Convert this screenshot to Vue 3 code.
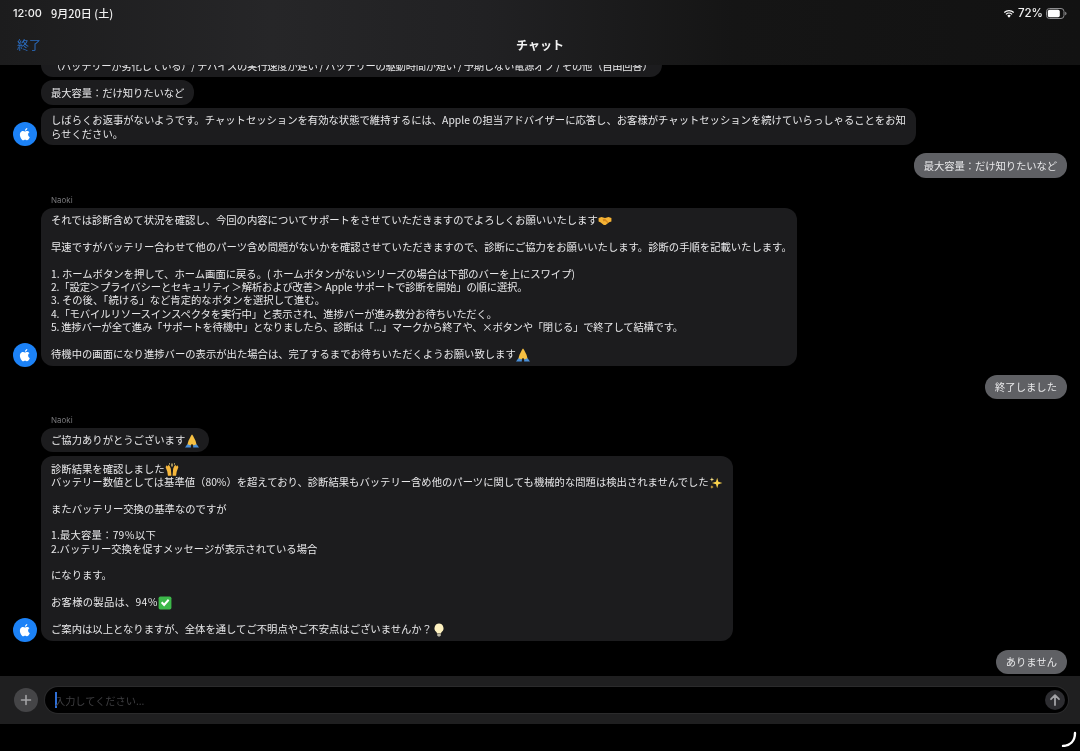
<script setup>
const blank = { t: '' }
const emojis = {
  shake: [
    { f: '#f5b335', d: 'M1 7l5-2 6 2 6-2 5 2v6l-4 1-6 5-3 0-6-5-3-1z' },
    { f: '#d98a1f', d: 'M8 9l4-1 6 6-1 2-5-4-3 1z' }
  ],
  pray: [
    { f: '#f6c042', d: 'M11.400 1l.6 1v14l-2 4-6-1.500 2-7z' },
    { f: '#f6c042', d: 'M12.600 1l-.6 1v14l2 4 6-1.500-2-7z' },
    { f: '#4a90d9', d: 'M0 23l4-5.500 6 2 0 3.500zM24 23l-4-5.500-6 2 0 3.500z' }
  ],
  hands: [
    { f: '#f6b73c', d: 'M1 7l2-3 2 2 1-3 2 2 2 5 1 12H5l-1-7z' },
    { f: '#f6b73c', d: 'M23 7l-2-3-2 2-1-3-2 2-2 5-1 12h6l1-7z' },
    { f: '#fde28a', d: 'M11 1h2v5h-2zM7.500 0h1v3h-1zM15.500 0h1v3h-1z' }
  ],
  spark: [
    { f: '#fbd34d', d: 'M14 3l2 7 7 2-7 2-2 7-2-7-7-2 7-2z' },
    { f: '#fde68a', d: 'M5 2l1 3 3 1-3 1-1 3-1-3-3-1 3-1z' },
    { f: '#f6c042', d: 'M5 16l.8 2.200L8 19l-2.200.8L5 22l-.8-2.200L2 19l2.200-.8z' }
  ],
  check: [
    { f: '#3cb84a', d: 'M4 1h16a3 3 0 0 1 3 3v16a3 3 0 0 1-3 3H4a3 3 0 0 1-3-3V4a3 3 0 0 1 3-3z' },
    { f: '#ffffff', d: 'M5 12l2.500-2.500 3 3L17 5l2.500 2.500-9 10.500z' }
  ],
  bulb: [
    { f: '#fdf1c0', d: 'M12 1a8 8 0 0 0-5 14c1 1 1.500 2 1.500 3h7c0-1 .5-2 1.500-3a8 8 0 0 0-5-14z' },
    { f: '#b9b4a4', d: 'M9 19h6v2l-1.500 2h-3L9 21z' }
  ]
}

const groups = [
  { id: 1, side: 'left', lines: [{ ls: -0.28, t: '（バッテリーが劣化している）/ デバイスの実行速度が遅い / バッテリーの駆動時間が短い / 予期しない電源オフ / その他（自由回答）' }] },
  { id: 2, side: 'left', gap: 3, lines: [{ ls: -0.08, t: '最大容量：だけ知りたいなど' }] },
  { id: 3, side: 'left', gap: 3, avatar: true, lines: [{ t: 'しばらくお返事がないようです。チャットセッションを有効な状態で維持するには、Apple の担当アドバイザーに応答し、お客様がチャットセッションを続けていらっしゃることをお知らせください。' }] },
  { id: 4, side: 'right', gap: 8, lines: [{ ls: -0.08, t: '最大容量：だけ知りたいなど' }] },
  { id: 5, side: 'left', label: 'Naoki', gap: 15, avatar: true, w: 756, lines: [
    { t: 'それでは診断含めて状況を確認し、今回の内容についてサポートをさせていただきますのでよろしくお願いいたします', e: 'shake' },
    blank,
    { t: '早速ですがバッテリー合わせて他のパーツ含め問題がないかを確認させていただきますので、診断にご協力をお願いいたします。診断の手順を記載いたします。' },
    blank,
    { t: '1. ホームボタンを押して、ホーム画面に戻る。( ホームボタンがないシリーズの場合は下部のバーを上にスワイプ)' },
    { ls: -0.15, t: '2.「設定＞プライバシーとセキュリティ＞解析および改善＞ Apple サポートで診断を開始」の順に選択。' },
    { t: '3. その後、「続ける」など肯定的なボタンを選択して進む。' },
    { ls: -0.11, t: '4.「モバイルリソースインスペクタを実行中」と表示され、進捗バーが進み数分お待ちいただく。' },
    { ls: -0.235, t: '5. 進捗バーが全て進み「サポートを待機中」となりましたら、診断は「...」マークから終了や、×ボタンや「閉じる」で終了して結構です。' },
    blank,
    { t: '待機中の画面になり進捗バーの表示が出た場合は、完了するまでお待ちいただくようお願い致します', e: 'pray' }
  ] },
  { id: 6, side: 'right', gap: 9, lines: [{ t: '終了しました' }] },
  { id: 7, side: 'left', label: 'Naoki', gap: 14, lines: [{ t: 'ご協力ありがとうございます', e: 'pray' }] },
  { id: 8, side: 'left', gap: 4, avatar: true, lines: [
    { t: '診断結果を確認しました', e: 'hands' },
    { t: 'バッテリー数値としては基準値（80%）を超えており、診断結果もバッテリー含め他のパーツに関しても機械的な問題は検出されませんでした', e: 'spark' },
    blank,
    { t: 'またバッテリー交換の基準なのですが' },
    blank,
    { ls: 0.2, t: '1.最大容量：79％以下' },
    { t: '2.バッテリー交換を促すメッセージが表示されている場合' },
    blank,
    { t: 'になります。' },
    blank,
    { ls: 0.25, t: 'お客様の製品は、94％', e: 'check' },
    blank,
    { t: 'ご案内は以上となりますが、全体を通してご不明点やご不安点はございませんか？', e: 'bulb' }
  ] },
  { id: 9, side: 'right', gap: 9, lines: [{ t: 'ありません' }] }
]
</script>

<template>
  <div class="page">
    <header class="top">
      <div class="status">
        <span class="time">12:00</span>
        <span class="date">9月20日 (土)</span>
        <span class="spacer"></span>
        <svg class="wifi" viewBox="0 0 16 12" width="12" height="9">
          <path d="M8 11.500L5.700 8.900a3.300 3.300 0 0 1 4.600 0z" fill="#fff" />
          <path d="M3.900 7.100a5.900 5.900 0 0 1 8.200 0" fill="none" stroke="#fff" stroke-width="1.600" />
          <path d="M1.700 4.700a9 9 0 0 1 12.600 0" fill="none" stroke="#fff" stroke-width="1.600" />
        </svg>
        <span class="pct">72%</span>
        <svg class="battery" viewBox="0 0 21 11" width="21" height="11">
          <rect x="0.500" y="0.500" width="17.500" height="10" rx="3" fill="none" stroke="#8e8e90" />
          <rect x="1.800" y="1.800" width="12" height="7.400" rx="1.700" fill="#fff" />
          <path d="M19.200 3.800c.9.300 1.300 1 1.300 1.700s-.4 1.400-1.300 1.700z" fill="#8e8e90" />
        </svg>
      </div>
      <div class="nav">
        <span class="done">終了</span>
        <span class="title">チャット</span>
      </div>
    </header>

    <main class="feed">
      <div
        v-for="g in groups"
        :key="g.id"
        class="group"
        :class="g.side"
        :style="{ marginTop: (g.gap || 0) + 'px' }"
      >
        <div v-if="g.label" class="label">{{ g.label }}</div>
        <div class="row">
          <svg v-if="g.avatar" class="avatar" viewBox="0 0 24 24" width="24" height="24">
            <circle cx="12" cy="12" r="12" fill="#1c82f7" />
            <path
              d="M15.100 12.500c0-1.500 1.200-2.200 1.300-2.300-.7-1-1.800-1.200-2.200-1.200-.9-.1-1.800.6-2.300.6s-1.200-.6-2-.5c-1 0-2 .6-2.500 1.500-1.100 1.900-.3 4.600.8 6.100.5.8 1.100 1.600 1.900 1.600s1.100-.5 2-.5 1.200.5 2 .5 1.400-.8 1.900-1.500c.6-.9.8-1.700.8-1.700s-1.700-.7-1.700-2.600z"
              fill="#fff"
            />
            <path d="M13.700 7.800c.4-.5.700-1.200.6-1.800-.6 0-1.300.4-1.700.9-.4.4-.7 1.100-.6 1.800.7 0 1.300-.4 1.700-.9z" fill="#fff" />
          </svg>
          <div class="bubble" :class="{ fixed: g.w }" :style="g.w ? { width: g.w + 'px' } : null">
            <div
              v-for="(line, i) in g.lines"
              :key="i"
              class="line"
              :style="line.ls ? { letterSpacing: line.ls + 'px' } : null"
            >
              {{ line.t }}<svg v-if="line.e" class="emoji" viewBox="0 0 24 24"><path v-for="(p, j) in emojis[line.e]" :key="j" :d="p.d" :fill="p.f" /></svg>
            </div>
          </div>
        </div>
      </div>
    </main>

    <footer class="composer">
      <button class="plus" type="button">
        <svg viewBox="0 0 24 24" width="24" height="24">
          <path d="M12 7.500v9M7.500 12h9" stroke="#a4a4a6" stroke-width="1.600" stroke-linecap="round" />
        </svg>
      </button>
      <div class="input">
        <span class="caret"></span>
        <span class="placeholder">入力してください...</span>
        <span class="send">
          <svg viewBox="0 0 20 20" width="20" height="20">
            <path d="M10 15V5.500M6 9.200l4-4 4 4" fill="none" stroke="#a2a2a6" stroke-width="1.800" stroke-linecap="round" stroke-linejoin="round" />
          </svg>
        </span>
      </div>
    </footer>
    <div class="bottom">
      <svg viewBox="0 0 16 16" width="16" height="16">
        <path d="M2 15C9 14.500 14 10 14 2" fill="none" stroke="#fff" stroke-width="2.400" stroke-linecap="round" />
      </svg>
    </div>
  </div>
</template>

<style scoped>
.page {
  width: 1080px;
  height: 751px;
  background: #000;
  display: flex;
  flex-direction: column;
  overflow: hidden;
  font-family: "Noto Sans CJK JP", "Liberation Sans", sans-serif;
  color: #e8e8ea;
  filter: blur(0.35px);
}
.top {
  height: 65px;
  flex: none;
  background: linear-gradient(90deg, #1c1c1d 0%, #262628 25%, #212123 45%, #151515 68%, #121212 100%);
  display: flex;
  flex-direction: column;
  position: relative;
  z-index: 1;
}
.status {
  height: 26px;
  padding: 0 13px;
  display: flex;
  align-items: center;
  font-size: 11px;
  color: #f0f0f0;
}
.time {
  font-family: "Inter", "Liberation Sans", sans-serif;
  font-weight: 500;
  width: 38px;
}
.date {
  font-weight: 500;
}
.spacer {
  flex: 1;
}
.pct {
  font-family: "Inter", "Liberation Sans", sans-serif;
  font-size: 11.5px;
  font-weight: 500;
  margin: 0 3px 0 3px;
}
.battery {
  margin-right: 0;
}
.nav {
  position: relative;
  height: 39px;
  display: flex;
  align-items: center;
  justify-content: center;
  padding-bottom: 2px;
  box-sizing: border-box;
}
.done {
  position: absolute;
  left: 17px;
  top: 11px;
  font-size: 12px;
  line-height: 16px;
  color: #2a6cc0;
}
.title {
  font-size: 12px;
  font-weight: 700;
  color: #f2f2f2;
}
.feed {
  flex: none;
  height: 611px;
  overflow: hidden;
  display: flex;
  flex-direction: column;
  justify-content: flex-end;
  padding-bottom: 2px;
  box-sizing: border-box;
  font-size: 10.34px;
}
.group {
  flex: none;
  display: flex;
  flex-direction: column;
}
.group.right {
  align-items: flex-end;
  padding-right: 13px;
}
.group.left {
  align-items: flex-start;
  padding-left: 41px;
}
.label {
  height: 14px;
  margin: 0 0 1px 10px;
  font-size: 8px;
  line-height: 14px;
  color: #77777a;
  font-family: "Inter", "Liberation Sans", sans-serif;
}
.row {
  position: relative;
  display: flex;
}
.avatar {
  position: absolute;
  left: -28px;
  bottom: -1px;
}
.bubble {
  max-width: 875px;
  box-sizing: border-box;
  padding: 5.5px 10px;
  border-radius: 12px;
  background: #1c1c1e;
}
.bubble.fixed .line {
  white-space: nowrap;
}
.right .bubble {
  background: #5f6064;
}
.line {
  min-height: 13.35px;
  line-height: 13.35px;
}
.emoji {
  width: 14px;
  height: 14px;
  margin: -3px 0;
  vertical-align: -1px;
}
.composer {
  flex: none;
  height: 48px;
  box-sizing: border-box;
  padding: 0 12px 0 14px;
  background: #1f1f20;
  display: flex;
  align-items: center;
  gap: 7px;
}
.plus {
  width: 24px;
  height: 24px;
  padding: 0;
  border: 0;
  border-radius: 50%;
  background: #454547;
  flex: none;
}
.plus svg {
  display: block;
}
.input {
  flex: 1;
  height: 26px;
  border-radius: 13px;
  background: #000;
  display: flex;
  align-items: center;
  padding: 0 3px 0 10px;
  box-shadow: 0 0 0 1px #2b2b2c;
}
.caret {
  width: 2px;
  height: 16px;
  background: #2f6fd6;
  flex: none;
}
.placeholder {
  margin-left: -2px;
  font-size: 10.2px;
  color: #3f3f42;
}
.send {
  margin-left: auto;
  width: 20px;
  height: 20px;
  border-radius: 50%;
  background: #2d2d31;
}
.send svg {
  display: block;
}
.bottom {
  flex: none;
  height: 27px;
  box-sizing: border-box;
  display: flex;
  justify-content: flex-end;
  align-items: flex-end;
  padding: 0 3px 4px 0;
}
</style>

<style>
html,
body {
  margin: 0;
  background: #000;
}
</style>
